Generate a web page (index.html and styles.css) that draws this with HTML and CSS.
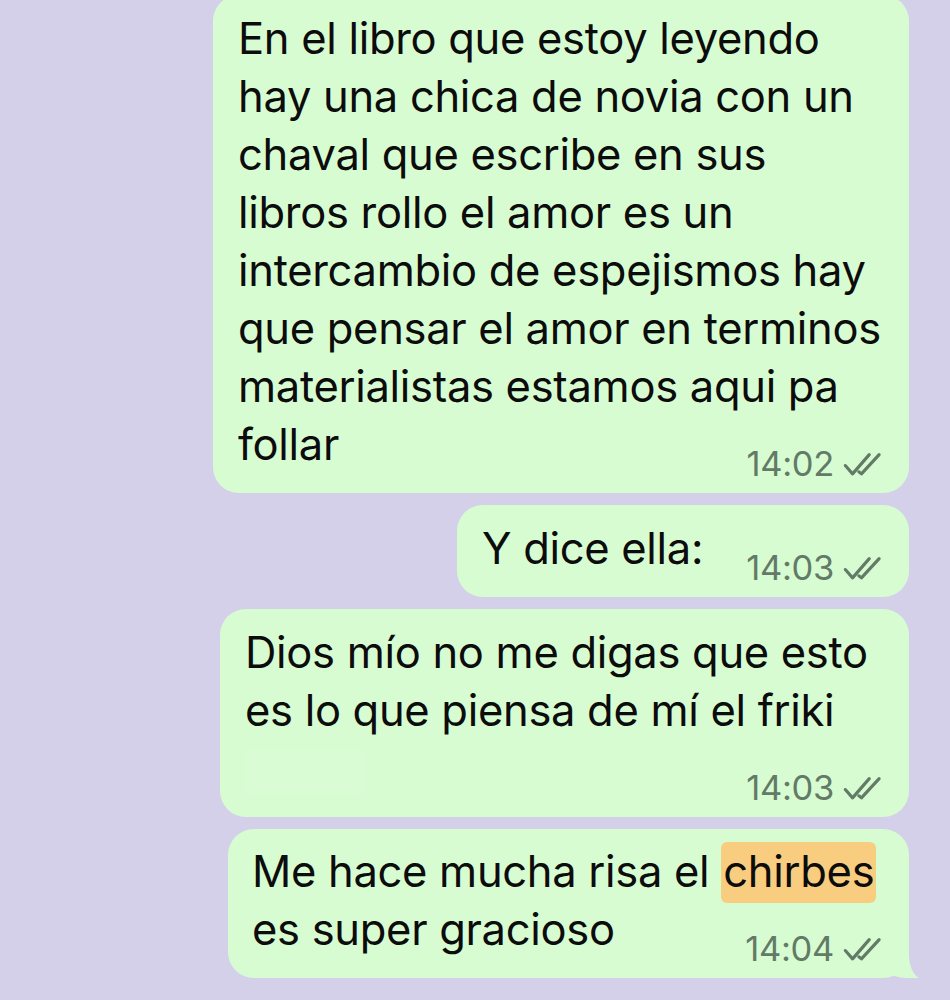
FILE: index.html
```html
<!DOCTYPE html>
<html lang="es">
<head>
  <meta charset="UTF-8" />
  <meta name="viewport" content="width=device-width, initial-scale=1" />
  <title>Chat</title>
  <link rel="stylesheet" href="styles.css">
</head>
<body>
  <div class="chat">

    <div class="bubble bubble-long">
      <div class="texto">
        En el libro que estoy leyendo<br>
        hay una chica de novia con un<br>
        chaval que escribe en sus<br>
        libros rollo el amor es un<br>
        intercambio de espejismos hay<br>
        que pensar el amor en terminos<br>
        materialistas estamos aqui pa<br>
        follar
      </div>
      <div class="meta">
        <span class="hora">14:02</span>
        <svg class="checks" viewBox="0 0 38 24" width="40" height="25">
          <path d="M2 13 L9 21 L25 2.5" />
          <path d="M15 19 L17.5 21 L34.5 2.5" />
        </svg>
      </div>
    </div>

    <div class="bubble bubble-corta">
      <div class="texto">Y dice ella:</div>
      <div class="meta">
        <span class="hora">14:03</span>
        <svg class="checks" viewBox="0 0 38 24" width="40" height="25">
          <path d="M2 13 L9 21 L25 2.5" />
          <path d="M15 19 L17.5 21 L34.5 2.5" />
        </svg>
      </div>
    </div>

    <div class="bubble bubble-friki">
      <div class="texto">
        Dios mío no me digas que esto<br>
        es lo que piensa de mí el friki<br>
        <span class="borrado"></span>
      </div>
      <div class="meta">
        <span class="hora">14:03</span>
        <svg class="checks" viewBox="0 0 38 24" width="40" height="25">
          <path d="M2 13 L9 21 L25 2.5" />
          <path d="M15 19 L17.5 21 L34.5 2.5" />
        </svg>
      </div>
    </div>

    <div class="bubble bubble-ultima con-cola">
      <div class="texto">
        Me hace mucha risa el <mark class="resaltado">chirbes</mark><br>
        es super gracioso
      </div>
      <div class="meta">
        <span class="hora">14:04</span>
        <svg class="checks" viewBox="0 0 38 24" width="40" height="25">
          <path d="M2 13 L9 21 L25 2.5" />
          <path d="M15 19 L17.5 21 L34.5 2.5" />
        </svg>
      </div>
    </div>

  </div>
</body>
</html>
```

FILE: styles.css
```css
body {
  margin: 0;
  background-color: #d5d0ea;
  font-family: 'Inter', 'Liberation Sans', sans-serif;
  color: #0c0c0c;
  overflow: hidden;
}

.chat {
  display: flex;
  flex-direction: column;
  align-items: flex-end;
  gap: 12px;
  margin-top: -5px;
  padding-right: 41px;
}

.bubble {
  position: relative;
  display: flex;
  flex-direction: column;
  box-sizing: border-box;
  background-color: #d8fcd2;
  border-radius: 26px;
  padding: 14px 26px 12px 25px;
}

.bubble-long {
  width: 696px;
}

.bubble-corta {
  width: 452px;
}

.bubble-friki {
  width: 689px;
}

.bubble-ultima {
  width: 681px;
  padding-left: 24px;
  padding-top: 13px;
}

.texto {
  font-size: 43.5px;
  line-height: 58px;
  white-space: nowrap;
  letter-spacing: -0.3px;
}

.borrado {
  display: inline-block;
  width: 120px;
  height: 44px;
  vertical-align: middle;
  background-color: #dafcd5;
  border-radius: 6px;
}

.resaltado {
  background-color: #f8cd80;
  color: inherit;
  border-radius: 6px;
  padding: 3px 2px 6px;
}

.meta {
  display: flex;
  justify-content: flex-end;
  align-items: center;
  gap: 9px;
  height: 36px;
  margin-top: -28px;
}

.hora {
  font-size: 34.5px;
  color: #627a66;
  letter-spacing: -0.3px;
}

.checks {
  fill: none;
  stroke: #627a66;
  stroke-width: 3;
  stroke-linecap: round;
  stroke-linejoin: round;
  margin-top: 2px;
}

/* cola del ultimo mensaje */
.con-cola::before {
  content: "";
  position: absolute;
  right: -14px;
  bottom: 0;
  width: 32px;
  height: 30px;
  background-color: #d8fcd2;
  border-bottom-left-radius: 16px 6px;
}

.con-cola::after {
  content: "";
  position: absolute;
  right: -40px;
  bottom: -1px;
  width: 40px;
  height: 32px;
  background-color: #d5d0ea;
  border-bottom-left-radius: 14px 24px;
}
```
